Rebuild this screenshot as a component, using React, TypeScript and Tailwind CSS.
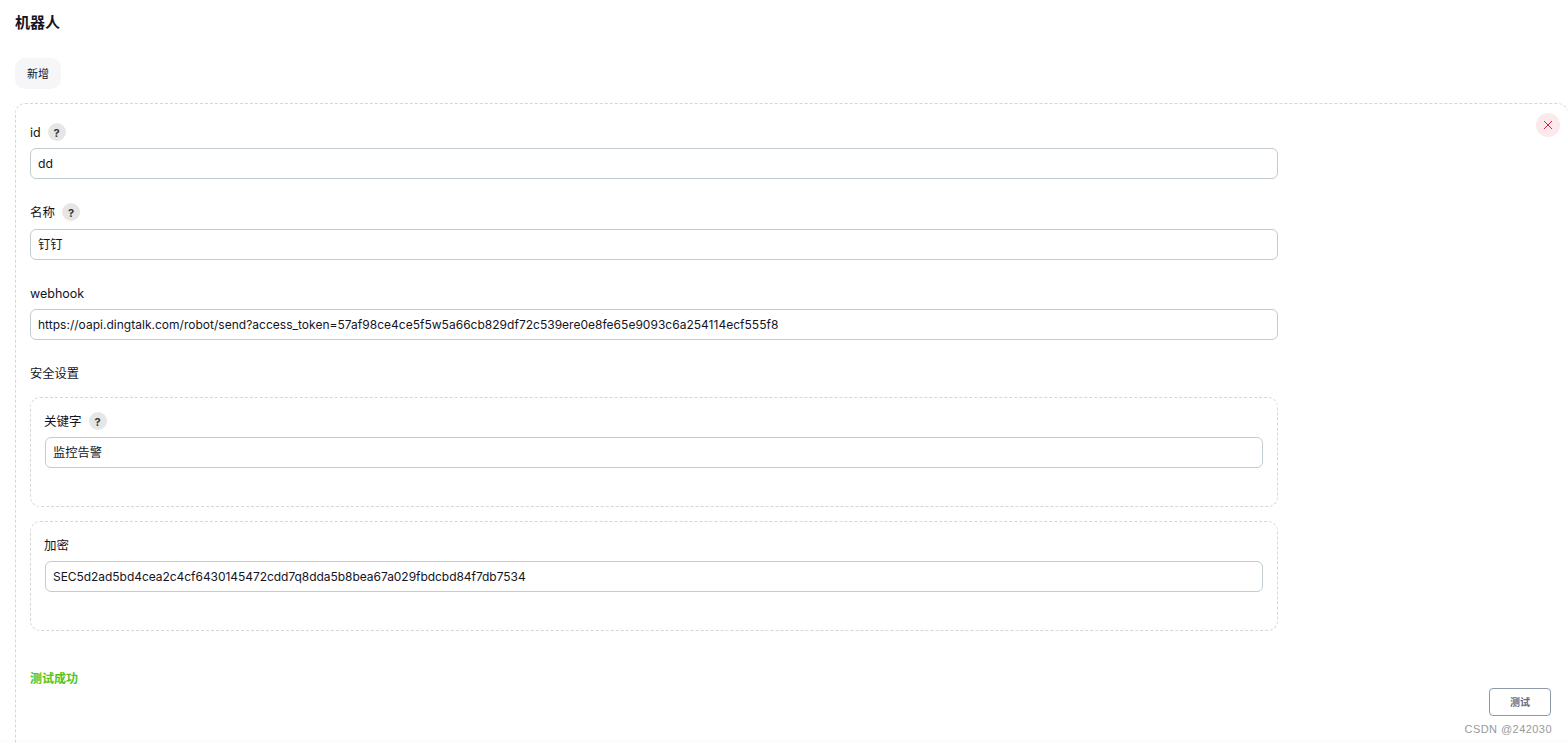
const font = 'font-["Inter","Noto_Sans_CJK_SC",sans-serif]';

function Help() {
  return (
    <span className="ml-[7px] flex h-[18px] w-[18px] items-center justify-center rounded-full bg-[#e6e6e6] pt-[2px] text-[11px] font-bold text-[#333]">
      ?
    </span>
  );
}

function Field({ label, help, value, className, valueClass, labelClass, gapClass }: { label: string; help?: boolean; value: string; className?: string; valueClass?: string; labelClass?: string; gapClass?: string }) {
  return (
    <div className={className}>
      <div className={`flex h-[18px] items-center text-[12.5px] leading-[18px] text-[#14141f] ${labelClass ?? ""}`}>
        <span className="pt-[2px]">{label}</span>
        {help && <Help />}
      </div>
      <div className={`flex h-[31px] items-center rounded-[6px] border border-[#c3ccd1] bg-white px-[7px] text-[#14141f] ${gapClass ?? "mt-[7px]"} ${valueClass ?? "pt-[2px] text-[12.25px]"}`}>
        {value}
      </div>
    </div>
  );
}

function Nested({ label, help, value, className, valueClass }: { label: string; help?: boolean; value: string; className?: string; valueClass?: string }) {
  return (
    <div className={`h-[110px] rounded-[10px] border border-dashed border-[#d4d7da] px-[14px] pt-[14px] ${className ?? ""}`}>
      <Field label={label} help={help} value={value} valueClass={valueClass} labelClass="-ml-px" />
    </div>
  );
}

export default function App() {
  return (
    <div className={`relative h-[743px] w-[1567px] overflow-hidden bg-white ${font}`}>
      <div className="absolute inset-x-0 bottom-0 h-[4px] bg-[#fcfcfc]" />
      <div className="pl-[15px] pt-[13px]">
        <h1 className="text-[15px] font-bold leading-[20px] text-[#14141f]">机器人</h1>
        <button className="mt-[25px] flex h-[31px] w-[46px] items-center justify-center rounded-[10px] bg-[#f6f6f8] pt-[1px] text-[11px] text-[#14141f]">
          新增
        </button>
        <div className="relative mt-[14px] h-[660px] w-[1553px] rounded-[10px] border border-dashed border-[#d4d7da] pl-[14px] pt-[19px]">
          <button className="absolute right-[7px] top-[9px] flex h-[24px] w-[24px] items-center justify-center rounded-full bg-[#fce9ec]">
            <svg width="10" height="10" viewBox="0 0 10 10" fill="none" stroke="#d6204a" strokeWidth="1">
              <path d="M1 1L9 9M9 1L1 9" />
            </svg>
          </button>
          <div className="w-[1248px]">
            <Field label="id" help value="dd" />
            <Field label="名称" help value="钉钉" className="mt-[24px]" gapClass="mt-[8px]" />
            <Field label="webhook" valueClass="text-[12px] tracking-[0.017px]" value="https://oapi.dingtalk.com/robot/send?access_token=57af98ce4ce5f5w5a66cb829df72c539ere0e8fe65e9093c6a254114ecf555f8" className="mt-[24px]" />
            <div className="mt-[24px] h-[18px] pt-[1px] text-[12.25px] leading-[18px] text-[#14141f]">安全设置</div>
            <Nested label="关键字" help value="监控告警" className="mt-[15px]" />
            <Nested label="加密" valueClass="text-[12px] tracking-[-0.045px]" value="SEC5d2ad5bd4cea2c4cf6430145472cdd7q8dda5b8bea67a029fbdcbd84f7db7534" className="mt-[14px]" />
            <div className="mt-[39px] h-[18px] text-[12px] font-bold leading-[18px] text-[#52c41a]">测试成功</div>
          </div>
          <button className="absolute right-[16px] top-[584px] flex h-[28px] w-[62px] items-center justify-center rounded-[4px] border border-[#8e9aa6] bg-white text-[10px] font-bold text-[#6b6b80]">
            测试
          </button>
        </div>
      </div>
      <div className="absolute right-[15px] top-[722px] text-[11px] leading-[14px] tracking-[0.45px] text-[#999] font-['Liberation_Sans',sans-serif]">CSDN @242030</div>
    </div>
  );
}
